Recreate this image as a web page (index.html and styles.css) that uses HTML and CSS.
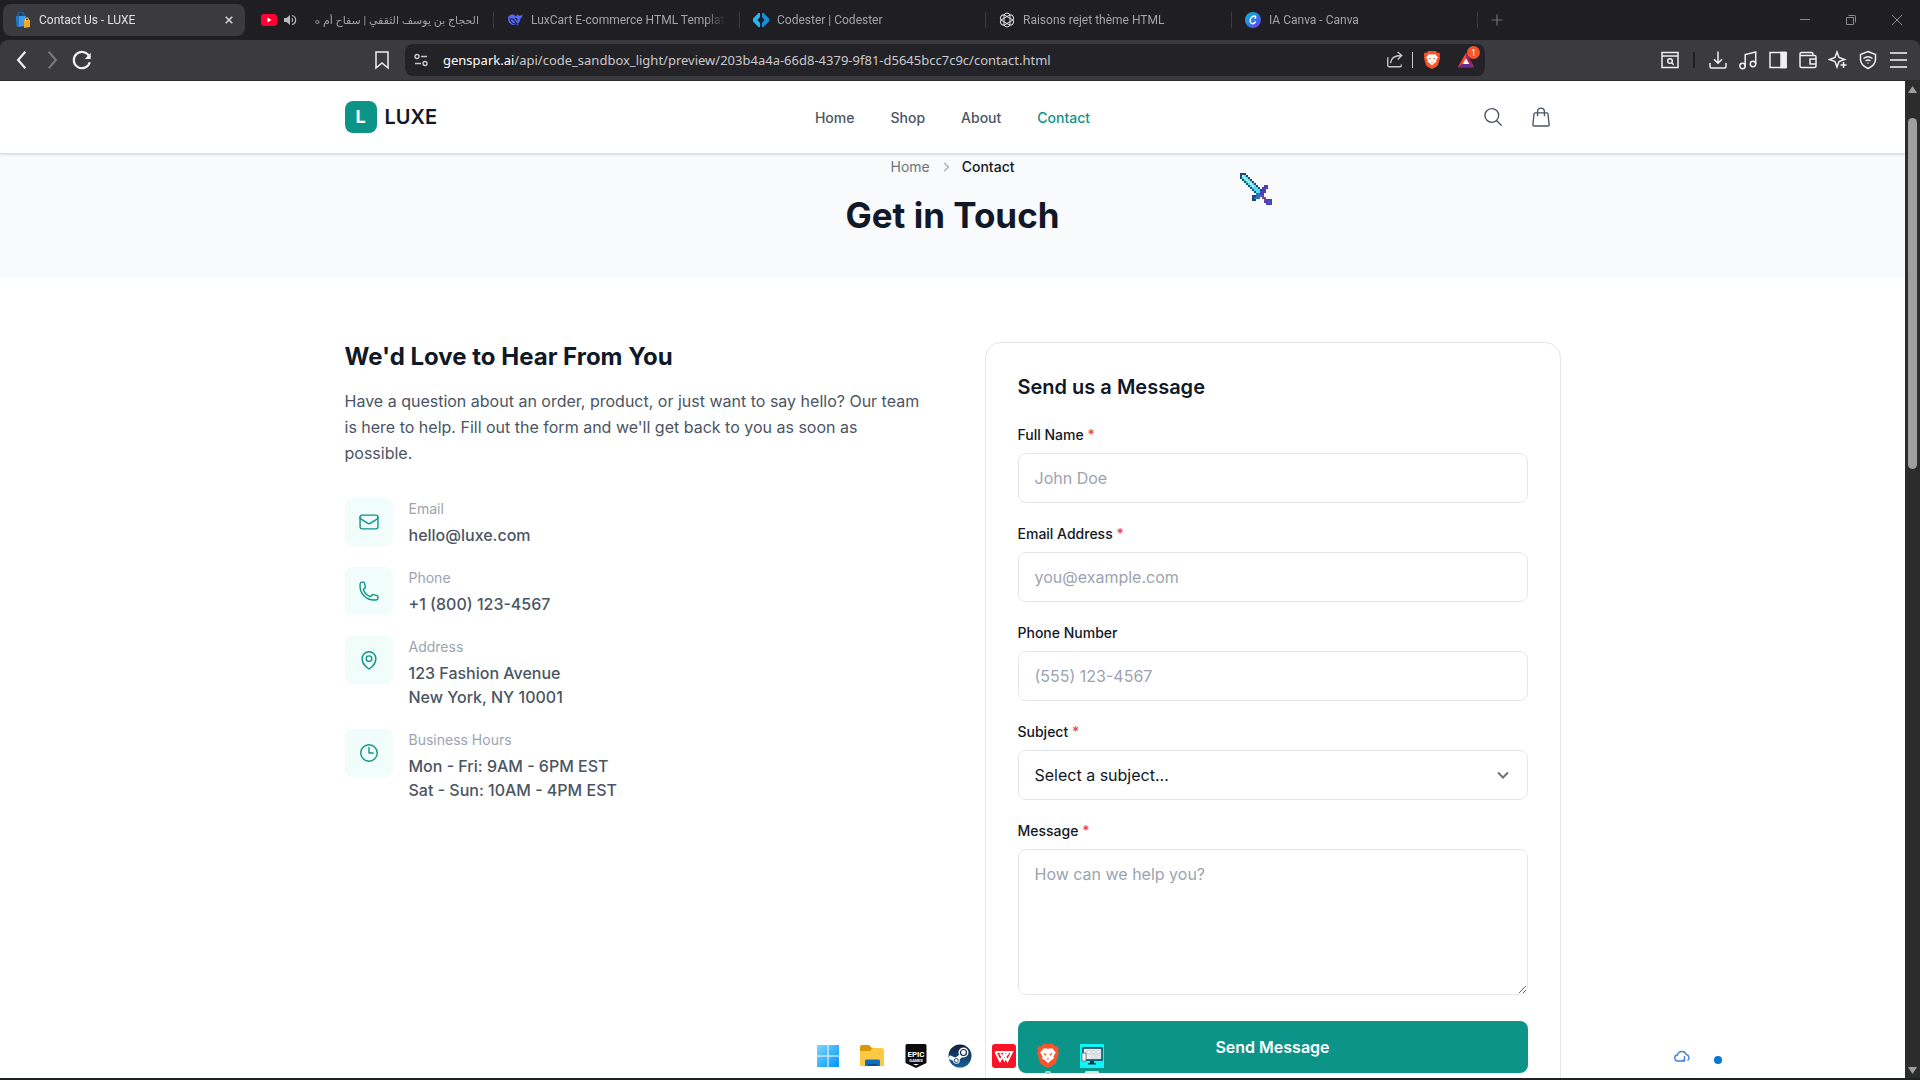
FILE: index.html
```html
<!DOCTYPE html>
<html lang="en">
<head>
    <meta charset="UTF-8">
    <meta name="viewport" content="width=device-width, initial-scale=1.0">
    <title>Contact Us - LUXE</title>
    <link rel="stylesheet" href="styles.css">
</head>
<body>

    <!-- Browser tabs -->
    <div class="tab-bar">
        <div class="tab active">
            <svg class="tab-icon" viewBox="0 0 16 16"><path d="M3 5V3a3 3 0 0 1 6 0v2" fill="none" stroke="#1565a8" stroke-width="1.4"/><path d="M1 4h10v10l-9 1z" fill="#3c9be8"/><path d="M1 4h3v10.700l-2 .3z" fill="#2076c4"/><path d="M9 8h6v7l-6 1z" fill="#f5a623"/><path d="M10.500 9.500v-2a1.500 1.500 0 0 1 3 0v2" fill="none" stroke="#ffd76a"/></svg>
            <span class="tab-title">Contact Us - LUXE</span>
            <button class="tab-close" aria-label="Close tab"><svg width="8" height="8" viewBox="0 0 8 8"><path d="M.7.7l6.600 6.600M7.300.7L.7 7.300" stroke="#d6d6da" stroke-width="1.500"/></svg></button>
        </div>
        <div class="tab playing">
            <svg class="tab-icon" viewBox="0 0 16 16"><rect y="2" width="16" height="12" rx="3" fill="#ff0033"/><path d="M6.500 5.500v5l4-2.500z" fill="#fff"/></svg>
            <svg class="tab-audio" viewBox="0 0 14 14"><path d="M1 5h2.500L7 2v10L3.500 9H1z" fill="#b9b9be"/><path d="M9 5q1.500 2 0 4M9 2.500a4.600 4.600 0 0 1 0 9" fill="none" stroke="#b9b9be" stroke-width="1.200"/></svg>
            <span class="tab-title" dir="rtl" lang="ar">الحجاج بن يوسف الثقفي | سفاح أم ه</span>
        </div>
        <div class="tab">
            <svg class="tab-icon" viewBox="0 0 16 16"><path d="M1 7c0-3 2.500-5 5-4.500 1 .2 1.500.8 2.500 1.500 1 .6 1.500-.5 1.300-1.700 1 .3 1.500 1.200 2.300 1.500 1 .2 1.700-.3 3.400-1-.1 2.300-1 3.600-2.300 4-.2 2.500-1.200 4.200-2.400 5.200l1 1c-1 .6-2.100.3-2.900-.2C5 14 1 11 1 7z" fill="#5468ff"/><path d="M3 7c3-1 4.500 1 7 5-4 .5-6.500-2-7-5zM8 6.500c1.500-.5 2.500.8 2 2" fill="none" stroke="#1f1e23" stroke-width="1.200"/></svg>
            <span class="tab-title">LuxCart E-commerce HTML Template</span>
        </div>
        <div class="tab">
            <svg class="tab-icon" viewBox="0 0 16 16"><path d="M7 1v4L4.500 8 7 11v4H5.500L0 9.500v-3L5.500 1z" fill="#29b6f0"/><path d="M9 1v4l2.500 3L9 11v4h1.500L16 9.500v-3L10.500 1z" fill="#1590d8"/></svg>
            <span class="tab-title">Codester | Codester</span>
        </div>
        <div class="tab">
            <svg class="tab-icon" viewBox="0 0 16 16"><g fill="none" stroke="#dcdce0"><rect id="petal" x="5" y="1" width="6" height="14" rx="3"/><use href="#petal" transform="rotate(60 8 8)"/><use href="#petal" transform="rotate(120 8 8)"/></g></svg>
            <span class="tab-title">Raisons rejet thème HTML</span>
        </div>
        <div class="tab">
            <svg class="tab-icon" viewBox="0 0 16 16"><defs><linearGradient id="canva" x1="0" y1="0" x2="1" y2="1"><stop offset="0" stop-color="#00c4cc"/><stop offset=".5" stop-color="#2f80e8"/><stop offset="1" stop-color="#7d2ae8"/></linearGradient></defs><circle cx="8" cy="8" r="8" fill="url(#canva)"/><path d="M10 6.200c1.200-.6.900-2.400-.9-2.200C6.500 4.300 4.900 7 5.100 9.300c.2 2.700 3.200 3.300 5.300.7" fill="none" stroke="#fff" stroke-width="1.400" stroke-linecap="round"/></svg>
            <span class="tab-title">IA Canva - Canva</span>
        </div>
        <button class="new-tab" aria-label="New tab"><svg width="12" height="12" viewBox="0 0 12 12"><path d="M6 .5v11M.5 6h11" stroke="#707075" stroke-width="1.200"/></svg></button>
        <div class="window-controls">
            <button aria-label="Minimize"><svg width="10" height="10" viewBox="0 0 10 10"><path d="M0 4.500h10"/></svg></button>
            <button aria-label="Restore"><svg width="10" height="10" viewBox="0 0 10 10"><path d="M.5 2.500h7v7h-7zM2.500.5h6a1 1 0 0 1 1 1v6"/></svg></button>
            <button aria-label="Close"><svg width="10" height="10" viewBox="0 0 10 10"><path d="M0 0l10 10M10 0L0 10"/></svg></button>
        </div>
    </div>

    <!-- Browser toolbar -->
    <div class="toolbar">
        <div class="nav-buttons">
            <button aria-label="Back"><svg viewBox="0 0 18 18"><path d="M12 1.500L5.500 9l6.500 7.500"/></svg></button>
            <button aria-label="Forward" class="disabled"><svg viewBox="0 0 18 18"><path d="M6 1.500L12.500 9 6 16.500"/></svg></button>
            <button aria-label="Reload"><svg viewBox="0 0 18 18"><path d="M15.800 6.500A7.300 7.300 0 1 0 16 11"/><path d="M16.800 2.500V8h-5.300z" fill="#f0f0f2" stroke="none"/></svg></button>
        </div>
        <div class="address-wrap">
            <button class="tool" aria-label="Bookmark"><svg viewBox="0 0 20 20"><path d="M4 2h12v16l-6-5-6 5z"/></svg></button>
            <div class="address-bar">
                <svg class="site-icon" viewBox="0 0 16 16"><g fill="none" stroke="#c8c8cc" stroke-width="1.400"><circle cx="4" cy="4.500" r="2"/><path d="M8 4.500h6M2 11.500h6"/><circle cx="12" cy="11.500" r="2"/></g></svg>
                <span class="address-text"><b>genspark.ai</b>/api/code_sandbox_light/preview/203b4a4a-66d8-4379-9f81-d5645bcc7c9c/contact.html</span>
                <button class="share" aria-label="Share"><svg viewBox="0 0 20 20"><path d="M2 7v9a1.500 1.500 0 0 0 1.500 1.500h12A1.500 1.500 0 0 0 17 16v-1M5 13.500C5.500 8 9.500 5 17 5M13 1l4.500 4-4.500 4.500"/></svg></button>
                <span class="address-divider"></span>
                <button class="brave" aria-label="Brave Shields"><svg viewBox="0 0 20 20"><path id="braveShield" d="M6 0h8l2 2 2-.2 1 2.200-.6 1.500.6 2-2.500 8.500L14 18l-4 2-4-2-2.500-2L1 7.500l.6-2L1 4l1-2.200L4 2z" fill="#fb542b"/><path id="braveFace" d="M6.500 3.500L10 4l3.500-.5 3 3.500-2 3.500.5 1.500-2.500 1.500L10 16l-2.500-2.500L5 12l.5-1.500L3.500 7z" fill="#fff"/><path id="braveEyes" d="M6 7.500l2.800.8L8 10zM14 7.500l-2.800.8L12 10zM9 12h2l-1 1.500z" fill="#fb542b"/></svg></button>
                <button class="rewards" aria-label="Rewards"><svg viewBox="0 0 20 20"><path d="M10 2l9 16H1z" fill="#ff4724"/><path d="M1 18l5-4h8l5 4z" fill="#662d91"/><path d="M10 2l9 16-5-4-4-6z" fill="#9e1f63"/><path d="M10 8l3.500 6.500h-7z" fill="#fff"/></svg><span class="badge">1</span></button>
            </div>
        </div>
        <div class="extensions">
            <button class="tool" aria-label="Search tabs"><svg viewBox="0 0 20 20"><path d="M2 2.500h16v15H2zM2 6h16"/><circle cx="10" cy="11" r="2.300"/><path d="M11.700 12.700l2 2"/></svg></button>
            <span class="tool-divider"></span>
            <button class="tool" aria-label="Downloads"><svg viewBox="0 0 20 20"><path d="M10 1.500V13M6 9.200l4 4 4-4M2 13v3.500A1.500 1.500 0 0 0 3.500 18h13a1.500 1.500 0 0 0 1.500-1.500V13"/></svg></button>
            <button class="tool" aria-label="Media"><svg viewBox="0 0 20 20"><circle cx="4.500" cy="16" r="2.700"/><circle cx="15" cy="14" r="2.700"/><path d="M7.200 16V4.500L17.700 2v12"/></svg></button>
            <button class="tool" aria-label="Sidebar"><svg viewBox="0 0 20 20"><path d="M2 2.500h16v15H2z"/><path d="M13 2.500h5v15h-5z" fill="#f0f0f2"/></svg></button>
            <button class="tool" aria-label="Wallet"><svg viewBox="0 0 20 20"><path d="M15 5.500V4a1.500 1.500 0 0 0-1.500-1.500h-10A1.500 1.500 0 0 0 2 4v12a1.500 1.500 0 0 0 1.500 1.500h13A1.500 1.500 0 0 0 18 16V7a1.500 1.500 0 0 0-1.500-1.500H2M18 9h-6v5h6"/></svg></button>
            <button class="tool" aria-label="Leo AI"><svg viewBox="0 0 20 20"><path d="M9 2l2 5.500L16.500 9.500 11 11.500 9 17l-2-5.500L1.500 9.500 7 7.500z"/><path d="M15.500 12v6M12.500 15h6"/></svg></button>
            <button class="tool" aria-label="VPN"><svg viewBox="0 0 20 20"><path d="M10 1.500l7.500 3v5c0 4-3 7-7.500 9-4.500-2-7.500-5-7.500-9v-5zM5.500 8.500q4.500-3.500 9 0M7.500 11q2.500-2 5 0M9.500 13.300h1"/></svg></button>
            <button class="tool menu" aria-label="Menu"><svg viewBox="0 0 20 20"><path d="M2 3h17M2 10h17M2 17h17"/></svg></button>
        </div>
    </div>

    <div class="viewport">
        <div class="page">
            <header class="header">
                <div class="container header-inner">
                    <a href="#" class="logo"><span class="logo-mark">L</span>LUXE</a>
                    <nav class="nav">
                        <a href="#">Home</a>
                        <a href="#">Shop</a>
                        <a href="#">About</a>
                        <a href="#" class="current">Contact</a>
                    </nav>
                    <div class="header-actions">
                        <button aria-label="Search"><svg viewBox="0 0 24 24"><path d="M21 21l-5.200-5.200m0 0A7.500 7.500 0 1 0 5.200 5.200a7.500 7.500 0 0 0 10.600 10.600z"/></svg></button>
                        <button aria-label="Cart"><svg viewBox="0 0 24 24"><path d="M15.750 10.500V6a3.750 3.750 0 1 0-7.500 0v4.500m11.360-2l1.260 12a1.130 1.130 0 0 1-1.120 1.250H4.250a1.130 1.130 0 0 1-1.120-1.250l1.260-12a1.130 1.130 0 0 1 1.120-1h12.980c.58 0 1.060.43 1.120 1z"/></svg></button>
                    </div>
                </div>
            </header>

            <section class="hero">
                <div class="breadcrumb">
                    <a href="#">Home</a>
                    <svg width="14" height="14" viewBox="0 0 24 24"><path d="M9 5l7 7-7 7"/></svg>
                    <span>Contact</span>
                </div>
                <h1>Get in Touch</h1>
            </section>

            <main class="container contact-grid">
                <div class="info">
                    <h2>We'd Love to Hear From You</h2>
                    <p class="intro">Have a question about an order, product, or just want to say hello? Our team is here to help. Fill out the form and we'll get back to you as soon as possible.</p>
                    <div class="info-list">
                        <div class="info-item">
                            <div class="info-icon"><svg viewBox="0 0 24 24"><rect x="2.250" y="4.500" width="19.500" height="15" rx="2.250"/><path d="M2.250 6.750v.250a2.250 2.250 0 0 0 1.070 1.900l7.500 4.600a2.250 2.250 0 0 0 2.360 0l7.500-4.600a2.250 2.250 0 0 0 1.070-1.900v-.25"/></svg></div>
                            <div><div class="info-label">Email</div><div class="info-value">hello@luxe.com</div></div>
                        </div>
                        <div class="info-item">
                            <div class="info-icon"><svg viewBox="0 0 24 24"><path d="M2.250 6.750c0 8.284 6.716 15 15 15h2.250a2.250 2.250 0 0 0 2.250-2.250v-1.372c0-.516-.351-.966-.852-1.091l-4.423-1.106c-.44-.11-.902.055-1.173.417l-.97 1.293c-.282.376-.769.542-1.210.380a12.035 12.035 0 0 1-7.143-7.143c-.162-.441.004-.928.380-1.210l1.293-.970c.363-.271.527-.734.417-1.173L6.963 3.102a1.125 1.125 0 0 0-1.091-.852H4.500A2.250 2.250 0 0 0 2.250 4.500v2.250z"/></svg></div>
                            <div><div class="info-label">Phone</div><div class="info-value">+1 (800) 123-4567</div></div>
                        </div>
                        <div class="info-item">
                            <div class="info-icon"><svg viewBox="0 0 24 24"><circle cx="12" cy="10.500" r="3"/><path d="M19.500 10.500c0 7.140-7.500 11.250-7.500 11.250S4.500 17.640 4.500 10.500a7.500 7.500 0 1 1 15 0z"/></svg></div>
                            <div><div class="info-label">Address</div><div class="info-value">123 Fashion Avenue<br>New York, NY 10001</div></div>
                        </div>
                        <div class="info-item">
                            <div class="info-icon"><svg viewBox="0 0 24 24"><path d="M12 6v6h4.500"/><circle cx="12" cy="12" r="9"/></svg></div>
                            <div><div class="info-label">Business Hours</div><div class="info-value">Mon - Fri: 9AM - 6PM EST<br>Sat - Sun: 10AM - 4PM EST</div></div>
                        </div>
                    </div>
                </div>

                <form class="form-card">
                    <h3>Send us a Message</h3>
                    <div class="form-group">
                        <label for="name">Full Name <span class="required">*</span></label>
                        <input type="text" id="name" placeholder="John Doe">
                    </div>
                    <div class="form-group">
                        <label for="email">Email Address <span class="required">*</span></label>
                        <input type="email" id="email" placeholder="you@example.com">
                    </div>
                    <div class="form-group">
                        <label for="phone">Phone Number</label>
                        <input type="tel" id="phone" placeholder="(555) 123-4567">
                    </div>
                    <div class="form-group">
                        <label for="subject">Subject <span class="required">*</span></label>
                        <div class="select-wrap">
                            <select id="subject">
                                <option>Select a subject...</option>
                            </select>
                            <svg width="20" height="20" viewBox="0 0 20 20"><path d="M5 7.500l5 5 5-5"/></svg>
                        </div>
                    </div>
                    <div class="form-group message-group">
                        <label for="message">Message <span class="required">*</span></label>
                        <textarea id="message" placeholder="How can we help you?"></textarea>
                    </div>
                    <button type="button" class="btn">Send Message</button>
                </form>
            </main>
        </div>

        <div class="scrollbar">
            <svg width="9" height="7" viewBox="0 0 9 7"><path d="M4.500 0L9 7H0z"/></svg>
            <div class="scroll-track"><div class="scroll-thumb"></div></div>
            <svg width="9" height="7" viewBox="0 0 9 7"><path d="M0 0h9L4.500 7z"/></svg>
        </div>
    </div>

    <!-- Taskbar icons float over the window -->
    <div class="taskbar">
        <svg viewBox="0 0 24 24"><defs><linearGradient id="win" x1="0" y1="0" x2="1" y2="1"><stop offset="0" stop-color="#7cd6ff"/><stop offset="1" stop-color="#0093f5"/></linearGradient></defs><path d="M1 1h10.500v10.500H1zM12.500 1H23v10.500H12.500zM1 12.500h10.500V23H1zM12.500 12.500H23V23H12.500z" fill="url(#win)"/></svg>
        <svg viewBox="0 0 24 24"><path d="M0 3a2 2 0 0 1 2-2h7l3 3h10v5H0z" fill="#d9980a"/><path d="M0 7h10l3-3h9a2 2 0 0 1 2 2v16H0z" fill="#fcca42"/><path d="M5 22v-5a1.500 1.500 0 0 1 1.500-1.500h12A1.500 1.500 0 0 1 20 17v5z" fill="#0d6ebc"/><path d="M8 22v-2h9v2z" fill="#084d91"/></svg>
        <svg viewBox="0 0 24 24"><path d="M1.500 1.500A1.500 1.500 0 0 1 3 0h18a1.500 1.500 0 0 1 1.500 1.500V19L12 24 1.500 19z" fill="#0b0b0b"/><text x="12" y="12.500" class="epic-top">EPIC</text><text x="12" y="17.500" class="epic-bottom">GAMES</text><path d="M9 20h6l-3 1.500z" fill="#fff"/></svg>
        <svg viewBox="0 0 24 24"><defs><linearGradient id="steam" x1="0" y1="0" x2="0" y2="1"><stop offset="0" stop-color="#111d3c"/><stop offset="1" stop-color="#15609a"/></linearGradient></defs><circle cx="12" cy="12" r="11.500" fill="url(#steam)"/><path d="M1 13l7 3M9 15l5-4" fill="none" stroke="#fff" stroke-width="4"/><circle cx="8.500" cy="16.500" r="3.300" fill="#fff"/><circle cx="8.300" cy="16.500" r="2" fill="#fff" stroke="#15487a"/><circle cx="15.500" cy="8.500" r="5" fill="#fff"/><circle cx="15.500" cy="8.500" r="3" fill="#fff" stroke="#182b50" stroke-width="1.200"/></svg>
        <svg viewBox="0 0 24 24"><rect width="24" height="24" rx="3" fill="#fa1428"/><path d="M3.500 8H15l-2.500 8L8 9.500M3.500 8L8 17l4-7 3.500 7L20 8h-3.500l-1.500 3" fill="none" stroke="#fff" stroke-width="2"/></svg>
        <svg viewBox="0 0 20 20"><use href="#braveShield"/><use href="#braveFace"/><use href="#braveEyes"/></svg>
        <svg viewBox="0 0 24 24"><path d="M0 0h24v24H0z" fill="#0ff5f5"/><path d="M3 4h19v12H3z" fill="#e6ebef" stroke="#16364a" stroke-width="1.400"/><path d="M7 6.500h3v3H7zM12 6.500h3v3h-3zM17 6.500h3v3h-3zM12 11h3v3h-3zM17 11h3v3h-3z" fill="#fff" stroke="#b3bec8" stroke-width=".6"/><path d="M2 9h4v8H2z" fill="#f5f5f5" stroke="#51697a" stroke-width=".8"/><path d="M10 17h4v2h-4zM8 19h8v1.500H8z" fill="#16364a"/></svg>
        <span class="running running-brave"></span>
        <span class="running running-app"></span>
    </div>
    <div class="tray">
        <svg width="16" height="12" viewBox="0 0 16 12"><path d="M11 11H4a3 3 0 0 1-.5-6 4.600 4.600 0 0 1 8.800-.5A3.300 3.300 0 0 1 13.500 10.500M10.500 6v4.500H7.500" fill="none" stroke="#4a7fd6" stroke-width="1.400"/></svg>
        <span class="tray-dot"></span>
    </div>

    <!-- Sword cursor -->
    <svg class="cursor" viewBox="0 0 16 16" shape-rendering="crispEdges">
        <path stroke="#1f4a78" d="M0 .5h3M0 1.500h1M3 1.500h1M0 2.500h1M4 2.500h1M1 3.500h1M5 3.500h1M2 4.500h1M6 4.500h1M3 5.500h1M7 5.500h1M4 6.500h1M8 6.500h1M5 7.500h1M9 7.500h1M6 8.500h1M10 8.500h1M7 9.500h1M6 11.500h2M6 12.500h1M6 13.500h2"/>
        <path stroke="#4fdcf2" d="M1 1.500h2M1 2.500h3M2 3.500h3M3 4.500h3M4 5.500h3M5 6.500h3M6 7.500h3M7 8.500h3M8 9.500h2"/>
        <path stroke="#b8f7ff" d="M1 1.500h1M2 2.500h1M3 3.500h1M4 4.500h1M5 5.500h1M6 6.500h1"/>
        <path stroke="#4a40b8" d="M12 6.500h2M11 7.500h3M11 8.500h2M10 9.500h3M10 10.500h2M13 13.500h3M12 14.500h4M13 15.500h3"/>
        <path stroke="#2a6fc4" d="M8 10.500h2M8 11.500h3M7 12.500h3M14 14.500h1"/>
        <path stroke="#8a3f86" d="M11 11.500h1M11 12.500h2M12 13.500h1"/>
    </svg>

</body>
</html>
```
FILE: styles.css
```css
* {
    margin: 0;
    padding: 0;
    box-sizing: border-box;
}

body {
    display: flex;
    flex-direction: column;
    height: 100vh;
    overflow: hidden;
    position: relative;
    background: #202124;
    font-family: 'Inter', sans-serif;
    color: #111827;
}

button {
    border: none;
    background: none;
    font-family: inherit;
    cursor: pointer;
}

a {
    color: inherit;
    text-decoration: none;
}

svg {
    display: block;
    flex-shrink: 0;
}

/* Browser tabs */
.tab-bar {
    display: flex;
    align-items: center;
    gap: 4px;
    height: 40px;
    flex-shrink: 0;
    padding-left: 3px;
    background: #1f1e23;
    font-family: 'Roboto', 'DejaVu Sans', sans-serif;
    font-size: 12px;
    color: #a3a3a8;
}

.tab {
    display: flex;
    align-items: center;
    flex: 0 1 242px;
    min-width: 0;
    height: 32px;
    padding: 0 12px;
    gap: 8px;
    position: relative;
}

.tab.playing {
    gap: 6px;
}

.tab.active {
    background: #3b3a3f;
    border-radius: 8px;
    color: #e0e0e4;
}

.tab:not(.active)::after {
    content: "";
    position: absolute;
    right: -3px;
    top: 8px;
    width: 1px;
    height: 16px;
    background: #3b3a3f;
}

.tab-icon {
    width: 16px;
    height: 16px;
}

.tab-audio {
    width: 14px;
    height: 14px;
}

.tab-title {
    flex: 1;
    min-width: 0;
    overflow: hidden;
    white-space: nowrap;
    mask-image: linear-gradient(to right, #000 90%, transparent);
}

.tab-title[dir="rtl"] {
    font-size: 11px;
    mask-image: linear-gradient(to left, #000 90%, transparent);
}

.new-tab {
    padding: 12px;
}

.window-controls {
    display: flex;
    margin-left: auto;
}

.window-controls button {
    width: 46px;
    height: 40px;
    display: flex;
    align-items: center;
    justify-content: center;
}

.window-controls path {
    fill: none;
    stroke: #8a8a8f;
}

/* Browser toolbar */
.toolbar {
    display: flex;
    align-items: center;
    height: 41px;
    flex-shrink: 0;
    padding: 0 12px;
    background: #3b3a3f;
    border-bottom: 1px solid #2b2a2e;
    border-radius: 8px 8px 0 0;
}

.toolbar svg {
    width: 20px;
    height: 20px;
}

.nav-buttons {
    display: flex;
    gap: 10px;
    flex: 0 1 360px;
}

.nav-buttons svg {
    fill: none;
    stroke: #f0f0f2;
    stroke-width: 2;
}

.nav-buttons .disabled svg {
    stroke: #77767b;
}

.address-wrap {
    display: flex;
    align-items: center;
    flex: 0 1 1113px;
    gap: 13px;
}

.tool svg {
    fill: none;
    stroke: #f0f0f2;
    stroke-width: 1.5px;
}

.address-bar {
    flex: 1;
    display: flex;
    align-items: center;
    height: 32px;
    padding: 0 10px 0 8px;
    background: #232227;
    border-radius: 8px;
    font-family: 'Noto Sans', sans-serif;
    font-size: 13px;
    color: #c8c8cc;
}

.address-bar .site-icon {
    width: 16px;
    height: 16px;
    margin-right: 14px;
}

.address-text {
    flex: 1;
    white-space: nowrap;
}

.address-text b {
    font-weight: normal;
    color: #fff;
}

.share svg {
    width: 18px;
    height: 18px;
    fill: none;
    stroke: #c8c8cc;
    stroke-width: 1.5px;
}

.address-divider {
    width: 1px;
    height: 16px;
    margin: 0 10px 0 8px;
    background: #c8c8cc;
}

.brave svg {
    width: 18px;
    height: 18px;
}

.rewards {
    margin-left: 16px;
    position: relative;
}

.rewards svg {
    width: 18px;
    height: 18px;
}

.badge {
    position: absolute;
    top: -5px;
    right: -5px;
    width: 13px;
    height: 13px;
    border-radius: 7px;
    background: #fb542b;
    color: #fff;
    font-size: 9px;
    line-height: 13px;
}

.extensions {
    display: flex;
    align-items: center;
    gap: 10px;
    margin-left: auto;
}

.tool-divider {
    width: 2px;
    height: 16px;
    margin: 0 3px;
    background: #1f1e23;
}

.menu svg {
    stroke: #c8c8cc;
    stroke-width: 2px;
}

/* Page area */
.viewport {
    display: flex;
    flex: 1;
    min-height: 0;
    margin-bottom: 2px;
}

.page {
    flex: 1;
    overflow: hidden;
    background: #fff;
}

.container {
    max-width: 1280px;
    margin: 0 auto;
    padding: 0 32px;
}

.header {
    position: relative;
    background: #fff;
    box-shadow: 0 1px 3px rgba(0, 0, 0, 0.2);
}

.header-inner {
    display: grid;
    grid-template-columns: 1fr auto 1fr;
    align-items: center;
    height: 72px;
}

.logo {
    display: flex;
    align-items: center;
    gap: 8px;
    font-size: 20px;
    font-weight: 600;
}

.logo-mark {
    width: 32px;
    height: 32px;
    border-radius: 8px;
    background: #0d9488;
    color: #fff;
    font-size: 18px;
    font-weight: 700;
    line-height: 32px;
    text-align: center;
}

.nav {
    display: flex;
    gap: 36px;
    font-size: 14px;
    font-weight: 500;
    color: #4b5563;
}

.nav .current {
    color: #0d9488;
}

.header-actions {
    display: flex;
    justify-content: flex-end;
    gap: 8px;
}

.header-actions button {
    width: 40px;
    height: 40px;
    padding: 9px;
}

.header-actions svg {
    width: 22px;
    height: 22px;
    fill: none;
    stroke: #4b5563;
    stroke-width: 1.5;
    stroke-linecap: round;
    stroke-linejoin: round;
}

.hero {
    padding: 3px 0 41px;
    background: #f9fafb;
    text-align: center;
}

.breadcrumb {
    display: flex;
    align-items: center;
    justify-content: center;
    gap: 9px;
    margin-bottom: 16px;
    font-size: 14px;
    line-height: 22px;
    color: #6b7280;
}

.breadcrumb svg {
    fill: none;
    stroke: #9ca3af;
    stroke-width: 2;
}

.breadcrumb span {
    color: #111827;
    font-weight: 500;
}

.hero h1 {
    font-size: 35px;
    line-height: 43px;
    font-weight: 700;
}

.contact-grid {
    display: grid;
    grid-template-columns: 1fr 1fr;
    gap: 64px;
    padding-top: 64px;
    padding-bottom: 64px;
}

.info h2 {
    font-size: 24px;
    line-height: 30px;
    font-weight: 700;
    margin-bottom: 16px;
}

.intro {
    font-size: 16px;
    line-height: 26px;
    color: #4b5563;
    margin-bottom: 32px;
}

.info-list {
    display: flex;
    flex-direction: column;
    gap: 20px;
}

.info-item {
    display: flex;
    align-items: flex-start;
    gap: 16px;
}

.info-icon {
    width: 48px;
    height: 48px;
    padding: 13px;
    border-radius: 8px;
    background: #f0fdfa;
}

.info-icon svg {
    width: 22px;
    height: 22px;
    fill: none;
    stroke: #0d9488;
    stroke-width: 1.5;
    stroke-linecap: round;
    stroke-linejoin: round;
}

.info-label {
    font-size: 14px;
    line-height: 21px;
    margin-bottom: 4px;
    color: #9ca3af;
}

.info-value {
    font-size: 16px;
    line-height: 24px;
    font-weight: 500;
    color: #4b5563;
}

/* Contact form */
.form-card {
    padding: 32px;
    border: 1px solid #e5e7eb;
    border-radius: 16px;
}

.form-card h3 {
    font-size: 20px;
    line-height: 25px;
    font-weight: 600;
    margin-bottom: 24px;
}

.form-group {
    margin-bottom: 20px;
}

.form-group label {
    display: block;
    font-size: 14px;
    line-height: 21px;
    font-weight: 500;
    margin-bottom: 8px;
}

.required {
    color: #ef4444;
}

.form-group input,
.form-group select,
.form-group textarea {
    display: block;
    width: 100%;
    height: 50px;
    padding: 12px 16px;
    border: 1px solid #e5e7eb;
    border-radius: 8px;
    background: #fff;
    color: #111827;
    font-family: inherit;
    font-size: 16px;
    line-height: 24px;
    outline: none;
}

.form-group input::placeholder,
.form-group textarea::placeholder {
    color: #9ca3af;
}

.form-group textarea {
    height: 146px;
    resize: vertical;
}

.message-group {
    margin-bottom: 26px;
}

.select-wrap {
    position: relative;
}

.form-group select {
    appearance: none;
}

.select-wrap svg {
    position: absolute;
    right: 15px;
    top: 15px;
    fill: none;
    stroke: #6b7280;
    stroke-width: 2;
    pointer-events: none;
}

.btn {
    width: 100%;
    height: 52px;
    border-radius: 8px;
    background: #0d9488;
    color: #fff;
    font-size: 16px;
    font-weight: 600;
}

/* Scrollbar */
.scrollbar {
    display: flex;
    flex-direction: column;
    align-items: center;
    width: 15px;
    padding: 5px 0 4px;
    background: #2c2c2c;
}

.scrollbar path {
    fill: #9f9f9f;
}

.scroll-track {
    flex: 1;
    padding: 25px 0;
}

.scroll-thumb {
    width: 9px;
    height: 38%;
    border-radius: 5px;
    background: #9f9f9f;
}

/* Taskbar */
.taskbar {
    position: absolute;
    left: 50%;
    bottom: 12px;
    transform: translateX(-50%);
    display: flex;
    gap: 20px;
}

.taskbar svg {
    width: 24px;
    height: 24px;
}

.epic-top,
.epic-bottom {
    fill: #fff;
    font-family: 'Roboto', sans-serif;
    font-size: 8px;
    font-weight: 700;
    text-anchor: middle;
}

.epic-bottom {
    font-size: 4px;
}

.running {
    position: absolute;
    bottom: -6px;
    height: 3px;
    border-radius: 2px;
    background: #9fd3cd;
}

.running-brave {
    right: 53px;
    width: 6px;
}

.running-app {
    right: 5px;
    width: 14px;
    background: #d5ece9;
}

.tray {
    position: absolute;
    right: 198px;
    bottom: 16px;
    display: flex;
    align-items: flex-end;
    gap: 24px;
}

.tray svg {
    margin-bottom: 2px;
}

.tray-dot {
    width: 8px;
    height: 8px;
    border-radius: 50%;
    background: #0078d4;
}

.cursor {
    position: absolute;
    left: 1240px;
    top: 173px;
    width: 32px;
    height: 32px;
}
```
